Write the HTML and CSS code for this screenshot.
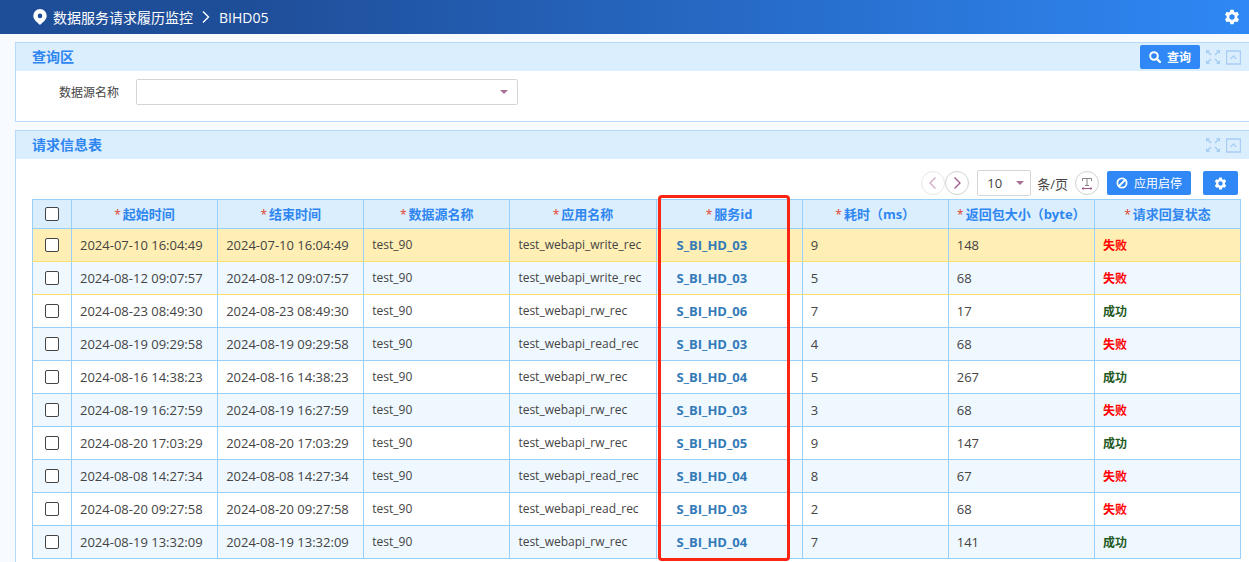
FILE: index.html
```html
<!DOCTYPE html>
<html lang="zh-CN">
<head>
  <meta charset="UTF-8">
  <meta name="viewport" content="width=device-width, initial-scale=1.0">
  <title>数据服务请求履历监控</title>
  <link rel="stylesheet" href="styles.css">
</head>
<body>
  <svg class="sprite" width="0" height="0">
    <symbol id="expand" viewBox="0 0 14 14">
      <path d="M1 1l4 4M13 1L9 5M1 13l4-4M13 13L9 9" fill="none" stroke="currentColor" stroke-width="1.6"/>
      <path d="M0 0h4L0 4zM10 0h4v4zM0 10v4h4zM14 10v4h-4z" fill="currentColor"/>
    </symbol>
    <symbol id="collapse" viewBox="0 0 15 15">
      <path d="M.5 1h14v13H.5z" fill="none" stroke="currentColor" stroke-width="1.4"/>
      <path d="M4.500 9L7.500 6l3 3" fill="none" stroke="currentColor" stroke-width="1.3"/>
    </symbol>
    <symbol id="gear" viewBox="0 0 24 24">
      <path fill="currentColor" fill-rule="evenodd" d="M9.500 1h5l.6 3.100 1.900 1.100 3-1 2.500 4.300-2.400 2.100v2.800l2.400 2.100-2.500 4.300-3-1-1.900 1.100-.6 3.100h-5l-.6-3.100-1.900-1.100-3 1-2.500-4.300 2.400-2.100v-2.800L1.500 8.500 4 4.200l3 1 1.900-1.100zM12 8a4 4 0 1 0 0 8 4 4 0 0 0 0-8z"/>
    </symbol>
  </svg>

  <header class="topbar">
    <svg class="pin" width="14" height="16" viewBox="0 0 14 16"><path fill="#fff" fill-rule="evenodd" d="M7 0a6.700 6.700 0 0 0-6.700 6.700C.3 10.500 4.500 13.500 7 16c2.500-2.500 6.700-5.500 6.700-9.300A6.700 6.700 0 0 0 7 0zm0 4.600a2.300 2.300 0 1 1 0 4.600 2.300 2.300 0 0 1 0-4.600z"/></svg>
    <span>数据服务请求履历监控</span>
    <svg class="sep" width="8" height="14" viewBox="0 0 8 14"><path d="M1 1.500L6.500 7 1 12.500" fill="none" stroke="#fff" stroke-width="1.4"/></svg>
    <span>BIHD05</span>
    <button class="topbar-gear" type="button" aria-label="设置"><svg width="16" height="16"><use href="#gear"/></svg></button>
  </header>

  <main>
    <section class="panel">
      <div class="panel-head">
        <h2>查询区</h2>
        <button class="btn btn-search" type="button">
          <svg width="12" height="12" viewBox="0 0 12 12"><circle cx="5" cy="5" r="3.800" fill="none" stroke="#fff" stroke-width="2"/><path d="M7.800 7.800l3.200 3.200" stroke="#fff" stroke-width="2.400" stroke-linecap="round"/></svg>
          查询
        </button>
        <button class="tool" type="button" aria-label="全屏"><svg width="14" height="14"><use href="#expand"/></svg></button>
        <button class="tool" type="button" aria-label="收起"><svg width="15" height="15"><use href="#collapse"/></svg></button>
      </div>
      <form class="query">
        <label for="source">数据源名称</label>
        <select id="source"><option></option></select>
      </form>
    </section>

    <section class="panel">
      <div class="panel-head">
        <h2>请求信息表</h2>
        <button class="tool" type="button" aria-label="全屏"><svg width="14" height="14"><use href="#expand"/></svg></button>
        <button class="tool" type="button" aria-label="收起"><svg width="15" height="15"><use href="#collapse"/></svg></button>
      </div>
      <div class="panel-body">
        <div class="toolbar">
          <div class="pager">
            <button class="round" type="button" aria-label="上一页" disabled><svg width="8" height="12" viewBox="0 0 8 12"><path d="M6.500 0.500L1 6l5.500 5.500" fill="none" stroke="currentColor" stroke-width="1.300"/></svg></button>
            <button class="round" type="button" aria-label="下一页"><svg width="8" height="12" viewBox="0 0 8 12"><path d="M1.500 0.500L7 6l-5.500 5.500" fill="none" stroke="currentColor" stroke-width="1.300"/></svg></button>
          </div>
          <select id="pageSize"><option>10</option></select>
          <label for="pageSize">条/页</label>
          <button class="round" type="button" aria-label="列宽"><svg width="12" height="14" viewBox="0 0 12 14"><path d="M1.500 5V2.500h9V5M6 2.500v7M4 9.500h4" fill="none" stroke="#8a8088"/><path d="M1 12.500h10M2.500 11.500l-1.500 1 1.500 1M9.500 11.500l1.500 1-1.500 1" fill="none" stroke="#a0568b"/></svg></button>
          <button class="btn btn-toggle" type="button">
            <svg width="12" height="12" viewBox="0 0 12 12"><circle cx="6" cy="6" r="4.600" fill="none" stroke="#fff" stroke-width="1.800"/><path d="M3 9l6-6" stroke="#fff" stroke-width="1.800"/></svg>
            应用启停
          </button>
          <button class="btn btn-config" type="button" aria-label="配置"><svg width="13" height="13"><use href="#gear"/></svg></button>
        </div>
        <div class="grid">
          <table>
            <thead>
              <tr>
                <th class="check"><input type="checkbox" aria-label="全选"></th>
                <th>起始时间</th>
                <th>结束时间</th>
                <th>数据源名称</th>
                <th>应用名称</th>
                <th>服务id</th>
                <th>耗时（ms）</th>
                <th>返回包大小（byte）</th>
                <th>请求回复状态</th>
              </tr>
            </thead>
            <tbody id="rows"></tbody>
          </table>
          <div class="highlight"></div>
        </div>
      </div>
    </section>
  </main>
  <script src="script.js"></script>
</body>
</html>
```
FILE: styles.css
```css
* { box-sizing: border-box; }
body { margin: 0; background: #f7faff; color: #444; font-family: "Open Sans", "Noto Sans CJK SC", sans-serif; font-size: 12px; overflow: hidden; }
button, select, input { font: inherit; margin: 0; }
button { padding: 0; border: none; background: none; display: flex; align-items: center; justify-content: center; cursor: pointer; }
svg { display: block; }
.sprite { position: absolute; }

.topbar { height: 34px; padding: 0 9px 0 33px; display: flex; align-items: center; color: #fff; font-size: 14px; background: linear-gradient(90deg, #1f4e99 0%, #1f4e99 20%, #2f88f5 100%); }
.pin { margin-right: 6px; }
.sep { margin: 0 9px; }
.topbar-gear { margin-left: auto; color: #fff; }

main { padding: 8px 0 0 15px; }
.panel { border: 1px solid #b9d9fb; border-right: none; background: #fff; margin-bottom: 8px; }
.panel-head { height: 28px; padding: 0 8px 0 16px; display: flex; align-items: center; background: #dbeefe; }
.panel-head h2 { margin: 0 auto 0 0; font-size: 14px; line-height: 20px; color: #2f86f0; }
.tool { color: #a9cdf5; margin-left: 6px; }
.btn { height: 24px; background: #2f88f5; color: #fff; border-radius: 2px; gap: 6px; }
.btn-search { width: 60px; font-weight: bold; }

.query { height: 50px; padding: 8px 0 0 43px; display: flex; align-items: flex-start; gap: 17px; }
.query label { line-height: 28px; }
select { appearance: none; height: 26px; border: 1px solid #d5d5d5; border-radius: 2px; color: #444; padding: 0 9px; background: #fff url("data:image/svg+xml,%3Csvg xmlns='http://www.w3.org/2000/svg' width='8' height='4'%3E%3Cpath d='M0 0h8L4 4z' fill='%23a86f98'/%3E%3C/svg%3E") no-repeat right 9px center; }
#source { width: 382px; }

.panel-body { padding: 12px 8px 8px 16px; }
.toolbar { height: 24px; margin-bottom: 4px; padding-right: 3px; display: flex; align-items: center; justify-content: flex-end; }
.pager { display: flex; margin-right: 8px; }
.round { width: 24px; height: 24px; border: 1px solid #ccd4d0; border-radius: 50%; color: #a0568b; }
.round:disabled { opacity: 0.5; }
#pageSize { width: 54px; font-size: 13px; background-position: right 6px center; }
.toolbar label { margin: 0 7px 0 6px; font-size: 13px; }
.btn-toggle { width: 84px; margin: 0 12px 0 8px; }
.btn-config { width: 35px; }

.grid { position: relative; }
table { width: 100%; table-layout: fixed; border-collapse: collapse; }
th, td { border: 1px solid #99d0fb; padding: 0 8px; white-space: nowrap; }
th { height: 29px; padding: 0; background: #dbeefe; color: #2f86f0; font-size: 13px; line-height: 18px; }
th:not(.check)::before { content: "*"; margin-right: 2px; color: #e0402c; font-size: 12px; font-weight: normal; }
td { height: 33px; font-size: 13px; line-height: 18px; }
.check { width: 39px; padding: 0; text-align: center; }
.check input { appearance: none; display: block; width: 14px; height: 14px; margin: 0 auto; border: 1px solid #444; border-radius: 2px; background: #fff; }
tbody tr:nth-child(even) { background: #eff8ff; }
tbody tr.current { background: #ffefb5; }
tbody tr.current td, tbody tr.current + tr td { border-bottom-color: #ffdf70; }
.name { font-size: 12px; }
td a { padding-left: 12px; color: #337ab7; font-weight: bold; text-decoration: none; }
.status { font-size: 12px; font-weight: bold; }
.fail { color: #f00; }
.ok { color: #1f5a1f; }

/* marks the service id column */
.highlight { position: absolute; top: -4px; bottom: -2px; left: calc((100% - 39px) / 2 + 41px); width: 132px; border: 3px solid #fb2514; border-radius: 4px; pointer-events: none; }
```
FILE: script.js
```javascript
const data = [
  ['2024-07-10 16:04:49', 'test_webapi_write_rec', '03', 9, 148, 0],
  ['2024-08-12 09:07:57', 'test_webapi_write_rec', '03', 5, 68, 0],
  ['2024-08-23 08:49:30', 'test_webapi_rw_rec', '06', 7, 17, 1],
  ['2024-08-19 09:29:58', 'test_webapi_read_rec', '03', 4, 68, 0],
  ['2024-08-16 14:38:23', 'test_webapi_rw_rec', '04', 5, 267, 1],
  ['2024-08-19 16:27:59', 'test_webapi_rw_rec', '03', 3, 68, 0],
  ['2024-08-20 17:03:29', 'test_webapi_rw_rec', '05', 9, 147, 1],
  ['2024-08-08 14:27:34', 'test_webapi_read_rec', '04', 8, 67, 0],
  ['2024-08-20 09:27:58', 'test_webapi_read_rec', '03', 2, 68, 0],
  ['2024-08-19 13:32:09', 'test_webapi_rw_rec', '04', 7, 141, 1]
];

document.getElementById('rows').innerHTML = data.map(([time, app, id, cost, size, ok], i) => `
  <tr class="${i === 0 ? 'current' : ''}">
    <td class="check"><input type="checkbox" aria-label="选择第${i + 1}行"></td>
    <td>${time}</td>
    <td>${time}</td>
    <td class="name">test_90</td>
    <td class="name">${app}</td>
    <td><a href="#">S_BI_HD_${id}</a></td>
    <td>${cost}</td>
    <td>${size}</td>
    <td><span class="status ${ok ? 'ok' : 'fail'}">${ok ? '成功' : '失败'}</span></td>
  </tr>`).join('');
```
